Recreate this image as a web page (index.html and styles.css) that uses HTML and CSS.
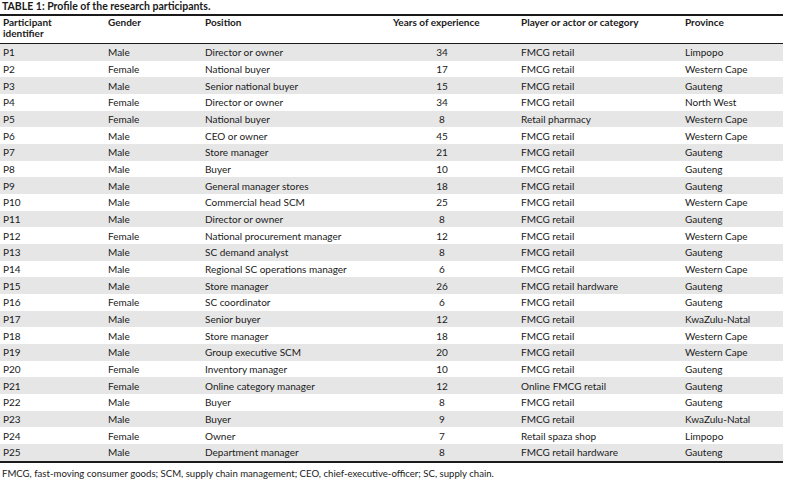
FILE: index.html
```html
<!DOCTYPE html>
<html lang="en">
<head>
<meta charset="utf-8">
<title>Table 1</title>
<link rel="stylesheet" href="styles.css">
</head>
<body>
<div class="page">
  <div class="caption"><span class="label">TABLE 1:</span> Profile of the research participants.</div>
  <div class="table">
    <div class="row head">
      <div class="cell">Participant<br>identifier</div>
      <div class="cell">Gender</div>
      <div class="cell">Position</div>
      <div class="cell">Years of experience</div>
      <div class="cell">Player or actor or category</div>
      <div class="cell">Province</div>
    </div>
    <div class="row"><div class="cell">P1</div><div class="cell">Male</div><div class="cell">Director or owner</div><div class="cell"><span class="num">34</span></div><div class="cell">FMCG retail</div><div class="cell">Limpopo</div></div>
    <div class="row"><div class="cell">P2</div><div class="cell">Female</div><div class="cell">National buyer</div><div class="cell"><span class="num">17</span></div><div class="cell">FMCG retail</div><div class="cell">Western Cape</div></div>
    <div class="row"><div class="cell">P3</div><div class="cell">Male</div><div class="cell">Senior national buyer</div><div class="cell"><span class="num">15</span></div><div class="cell">FMCG retail</div><div class="cell">Gauteng</div></div>
    <div class="row"><div class="cell">P4</div><div class="cell">Female</div><div class="cell">Director or owner</div><div class="cell"><span class="num">34</span></div><div class="cell">FMCG retail</div><div class="cell">North West</div></div>
    <div class="row"><div class="cell">P5</div><div class="cell">Female</div><div class="cell">National buyer</div><div class="cell"><span class="num">8</span></div><div class="cell">Retail pharmacy</div><div class="cell">Western Cape</div></div>
    <div class="row"><div class="cell">P6</div><div class="cell">Male</div><div class="cell">CEO or owner</div><div class="cell"><span class="num">45</span></div><div class="cell">FMCG retail</div><div class="cell">Western Cape</div></div>
    <div class="row"><div class="cell">P7</div><div class="cell">Male</div><div class="cell">Store manager</div><div class="cell"><span class="num">21</span></div><div class="cell">FMCG retail</div><div class="cell">Gauteng</div></div>
    <div class="row"><div class="cell">P8</div><div class="cell">Male</div><div class="cell">Buyer</div><div class="cell"><span class="num">10</span></div><div class="cell">FMCG retail</div><div class="cell">Gauteng</div></div>
    <div class="row"><div class="cell">P9</div><div class="cell">Male</div><div class="cell">General manager stores</div><div class="cell"><span class="num">18</span></div><div class="cell">FMCG retail</div><div class="cell">Gauteng</div></div>
    <div class="row"><div class="cell">P10</div><div class="cell">Male</div><div class="cell">Commercial head SCM</div><div class="cell"><span class="num">25</span></div><div class="cell">FMCG retail</div><div class="cell">Western Cape</div></div>
    <div class="row"><div class="cell">P11</div><div class="cell">Male</div><div class="cell">Director or owner</div><div class="cell"><span class="num">8</span></div><div class="cell">FMCG retail</div><div class="cell">Gauteng</div></div>
    <div class="row"><div class="cell">P12</div><div class="cell">Female</div><div class="cell">National procurement manager</div><div class="cell"><span class="num">12</span></div><div class="cell">FMCG retail</div><div class="cell">Western Cape</div></div>
    <div class="row"><div class="cell">P13</div><div class="cell">Male</div><div class="cell">SC demand analyst</div><div class="cell"><span class="num">8</span></div><div class="cell">FMCG retail</div><div class="cell">Gauteng</div></div>
    <div class="row"><div class="cell">P14</div><div class="cell">Male</div><div class="cell">Regional SC operations manager</div><div class="cell"><span class="num">6</span></div><div class="cell">FMCG retail</div><div class="cell">Western Cape</div></div>
    <div class="row"><div class="cell">P15</div><div class="cell">Male</div><div class="cell">Store manager</div><div class="cell"><span class="num">26</span></div><div class="cell">FMCG retail hardware</div><div class="cell">Gauteng</div></div>
    <div class="row"><div class="cell">P16</div><div class="cell">Female</div><div class="cell">SC coordinator</div><div class="cell"><span class="num">6</span></div><div class="cell">FMCG retail</div><div class="cell">Gauteng</div></div>
    <div class="row"><div class="cell">P17</div><div class="cell">Male</div><div class="cell">Senior buyer</div><div class="cell"><span class="num">12</span></div><div class="cell">FMCG retail</div><div class="cell">KwaZulu-Natal</div></div>
    <div class="row"><div class="cell">P18</div><div class="cell">Male</div><div class="cell">Store manager</div><div class="cell"><span class="num">18</span></div><div class="cell">FMCG retail</div><div class="cell">Western Cape</div></div>
    <div class="row"><div class="cell">P19</div><div class="cell">Male</div><div class="cell">Group executive SCM</div><div class="cell"><span class="num">20</span></div><div class="cell">FMCG retail</div><div class="cell">Western Cape</div></div>
    <div class="row"><div class="cell">P20</div><div class="cell">Female</div><div class="cell">Inventory manager</div><div class="cell"><span class="num">10</span></div><div class="cell">FMCG retail</div><div class="cell">Gauteng</div></div>
    <div class="row"><div class="cell">P21</div><div class="cell">Female</div><div class="cell">Online category manager</div><div class="cell"><span class="num">12</span></div><div class="cell">Online FMCG retail</div><div class="cell">Gauteng</div></div>
    <div class="row"><div class="cell">P22</div><div class="cell">Male</div><div class="cell">Buyer</div><div class="cell"><span class="num">8</span></div><div class="cell">FMCG retail</div><div class="cell">Gauteng</div></div>
    <div class="row"><div class="cell">P23</div><div class="cell">Male</div><div class="cell">Buyer</div><div class="cell"><span class="num">9</span></div><div class="cell">FMCG retail</div><div class="cell">KwaZulu-Natal</div></div>
    <div class="row"><div class="cell">P24</div><div class="cell">Female</div><div class="cell">Owner</div><div class="cell"><span class="num">7</span></div><div class="cell">Retail spaza shop</div><div class="cell">Limpopo</div></div>
    <div class="row"><div class="cell">P25</div><div class="cell">Male</div><div class="cell">Department manager</div><div class="cell"><span class="num">8</span></div><div class="cell">FMCG retail hardware</div><div class="cell">Gauteng</div></div>
  </div>
  <div class="note">FMCG, fast-moving consumer goods; SCM, supply chain management; CEO, chief-executive-officer; SC, supply chain.</div>
</div>
</body>
</html>
```
FILE: styles.css
```css
html, body {
  margin: 0;
  padding: 0;
  background: #ffffff;
}
.page {
  width: 783px;
  font-family: Lato, "Liberation Sans", sans-serif;
  color: #1a1a1a;
  font-size: 10px;
}
.caption {
  height: 14px;
  line-height: 12px;
  padding-left: 2px;
  font-weight: 700;
  font-size: 10.5px;
}
.table {
  border-top: 2px solid #1a1a1a;
  border-bottom: 2px solid #1a1a1a;
}
.row {
  display: grid;
  grid-template-columns: 105px 97px 188px 128px 164px 101px;
  height: 16.68px;
  align-items: center;
}
.row:nth-child(even) {
  background: #e6e6e6;
}
.row.head {
  height: 26px;
  align-items: start;
  padding-top: 1px;
  font-weight: 700;
  line-height: 11px;
  border-bottom: 1px solid #1a1a1a;
}
.cell {
  padding-left: 3px;
  white-space: nowrap;
}
.num {
  display: inline-block;
  width: 98px;
  text-align: center;
}
.note {
  padding-left: 2px;
  padding-top: 5px;
  font-size: 9.6px;
}
```
